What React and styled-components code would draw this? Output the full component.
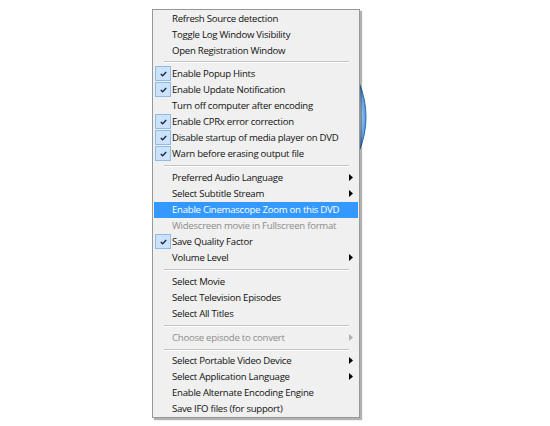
import React from 'react';
import styled, { createGlobalStyle } from 'styled-components';

const GlobalStyle = createGlobalStyle`
  html, body {
    margin: 0;
    padding: 0;
    background: #fff;
  }
  body {
    font-family: "Open Sans", "Noto Sans", "Liberation Sans", sans-serif;
  }
`;

const Stage = styled.div`
  position: relative;
  width: 550px;
  height: 426px;
  overflow: hidden;
  box-sizing: border-box;
  padding: 9px 0 0 152px;
  background: #fff;
`;

// the disc peeking out from behind the menu
const Disc = styled.svg`
  position: absolute;
  left: 189px;
  top: 28px;
`;

const Menu = styled.div`
  position: relative;
  z-index: 1;
  width: 208px;
  box-sizing: border-box;
  background: #f0f0f0;
  border: 1px solid #979797;
  box-shadow: 2px 2px 1px rgba(0, 0, 0, 0.3);
`;

const Item = styled.div`
  display: flex;
  align-items: center;
  height: 16px;
  margin: 0 1px;
  padding: 0 5px 0 1px;
  background: ${p => (p.$active ? '#3399ff' : 'transparent')};
  color: ${p => (p.$active ? '#fff' : p.$disabled ? '#8d8d8d' : '#111')};
  font-size: 9.6px;
  letter-spacing: -0.26px;
  white-space: nowrap;
`;

const CheckCell = styled.div`
  flex: none;
  display: flex;
  align-items: center;
  justify-content: center;
  width: 16px;
  height: 15px;
  margin-right: 1px;
  box-sizing: border-box;
  border: 1px solid ${p => (p.$on ? '#8fbbe8' : 'transparent')};
  background: ${p => (p.$on ? '#cbe2f8' : 'transparent')};
`;

const Label = styled.span`
  flex: 1;
`;

const Arrow = styled.svg`
  flex: none;
`;

const Separator = styled.div`
  height: 7.8px;
  display: flex;
  align-items: center;
  margin: 0 10px 0 11px;

  &::before {
    content: '';
    flex: 1;
    height: 1px;
    background: #c5c5c5;
    box-shadow: 0 1px 0 #fff;
  }
`;

const menu = [
  { label: 'Refresh Source detection' },
  { label: 'Toggle Log Window Visibility' },
  { label: 'Open Registration Window' },
  'sep',
  { label: 'Enable Popup Hints', checked: true },
  { label: 'Enable Update Notification', checked: true },
  { label: 'Turn off computer after encoding' },
  { label: 'Enable CPRx error correction', checked: true },
  { label: 'Disable startup of media player on DVD', checked: true },
  { label: 'Warn before erasing output file', checked: true },
  'sep',
  { label: 'Preferred Audio Language', sub: true },
  { label: 'Select Subtitle Stream', sub: true },
  { label: 'Enable Cinemascope Zoom on this DVD', active: true },
  { label: 'Widescreen movie in Fullscreen format', disabled: true },
  { label: 'Save Quality Factor', checked: true },
  { label: 'Volume Level', sub: true },
  'sep',
  { label: 'Select Movie' },
  { label: 'Select Television Episodes' },
  { label: 'Select All Titles' },
  'sep',
  { label: 'Choose episode to convert', sub: true, disabled: true },
  'sep',
  { label: 'Select Portable Video Device', sub: true },
  { label: 'Select Application Language', sub: true },
  { label: 'Enable Alternate Encoding Engine' },
  { label: 'Save IFO files (for support)' },
];

const CheckMark = () => (
  <svg width="7" height="6" viewBox="0 0 7 6">
    <path d="M0.8 3 L2.6 4.8 L6.2 1" fill="none" stroke="#1a2c48" strokeWidth="1.4" />
  </svg>
);

const App = () => {
  return (
    <>
      <GlobalStyle />
      <Stage>
        <Disc width="178" height="178" viewBox="0 0 178 178">
          <defs>
            <radialGradient id="disc" cx="50%" cy="50%" r="50%">
              <stop offset="0.9" stopColor="#eef5fd" />
              <stop offset="0.95" stopColor="#a6cbf0" />
              <stop offset="0.99" stopColor="#5b9be0" />
            </radialGradient>
          </defs>
          <circle cx="89" cy="89" r="88" fill="url(#disc)" stroke="#2d6bb5" strokeWidth="1" />
        </Disc>
        <Menu>
          {menu.map((m, i) =>
            m === 'sep' ? (
              <Separator key={i} />
            ) : (
              <Item key={i} $active={m.active} $disabled={m.disabled}>
                <CheckCell $on={m.checked}>{m.checked && <CheckMark />}</CheckCell>
                <Label>{m.label}</Label>
                {m.sub && (
                  <Arrow width="4" height="7" viewBox="0 0 4 7">
                    <path d="M0 0 L4 3.5 L0 7 Z" fill={m.disabled ? '#b0b0b0' : '#000'} />
                  </Arrow>
                )}
              </Item>
            )
          )}
        </Menu>
      </Stage>
    </>
  );
};

export default App;
